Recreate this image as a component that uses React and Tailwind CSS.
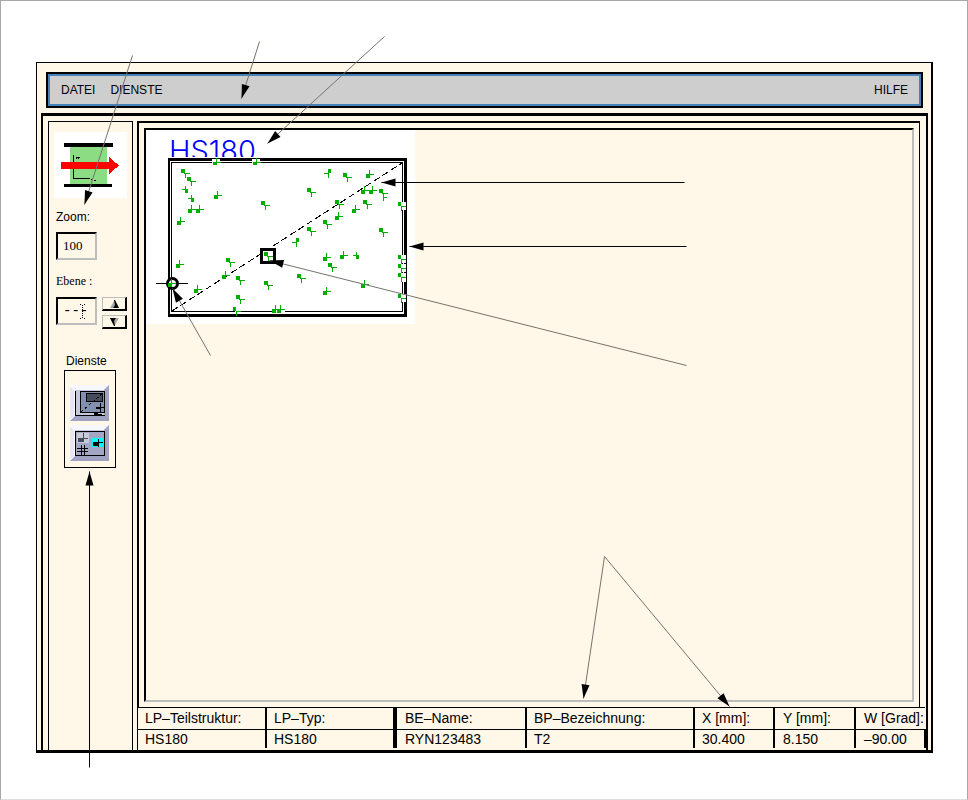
const MENU = ["DATEI", "DIENSTE"]

const FIELDS = [
  { label: "LP–Teilstruktur:", value: "HS180", head: "w-[128px] pl-[7px]", cell: "pl-[7px]" },
  { label: "LP–Typ:", value: "HS180", head: "w-[129px] border-l-2 pl-[7px]", cell: "border-l-2 pl-[7px]" },
  { label: "BE–Name:", value: "RYN123483", head: "w-[131px] border-l-4 pl-2", cell: "border-l-4 pl-2" },
  { label: "BP–Bezeichnung:", value: "T2", head: "w-[168px] border-l-2 pl-[7px]", cell: "border-l-2 pl-[7px]" },
  { label: "X [mm]:", value: "30.400", head: "w-[80px] border-l-2 pl-[7px]", cell: "border-l-2 pl-[7px]" },
  { label: "Y [mm]:", value: "8.150", head: "w-[81px] border-l-2 pl-2", cell: "border-l-2 pl-2" },
  { label: "W [Grad]:", value: "–90.00", head: "border-l-2 pl-2", cell: "border-x-2 pl-2" },
]

// component marks on the board, in board coordinates
const PARTS = {
  downRight: [
    [185, 173], [191, 181], [265, 205], [347, 177], [311, 192], [339, 204], [367, 204],
    [327, 224], [311, 231], [383, 232], [383, 193], [230, 262], [240, 280], [240, 299],
    [268, 285], [268, 256], [332, 267], [301, 278],
  ],
  upRight: [
    [191, 209], [199, 209], [180, 221], [217, 195], [369, 174], [364, 190], [372, 190],
    [338, 216], [355, 209], [179, 264], [197, 289], [225, 275], [171, 283], [275, 309],
    [280, 309], [326, 257], [343, 255], [326, 291], [364, 284],
  ],
  upLeft: [[185, 189], [191, 198], [356, 255]],
  downLeft: [[328, 173], [296, 242]],
  edgeDown: [[402, 206], [402, 259], [402, 268], [402, 277], [402, 298], [237, 311]],
  edgeUp: [[216, 162], [256, 162]],
}

const SHAPES = {
  downRight: "M-4 -4h4v4h5v1h-4v4h-1v-4h-1v-1h-3z",
  upRight: "M0 -4h1v4h4v1h-4v3h-4v-4h3z",
  upLeft: "M0 -3h1v3h2v4h-3v-3h-3v-1h3z",
  downLeft: "M0 -4h3v4h-2v5h-1v-4h-4v-1h4z",
  edgeDown: "M-4 -4h3v4h5v1h-4v4h-1v-5h-3z",
  edgeUp: "M0 -4h1v4h4v1h-4v2h-4v-3h3z",
}

const ARROWS = [
  { from: [132, 55], to: [84, 204] },
  { from: [259, 41], to: [241, 98] },
  { from: [384, 36], to: [267, 143] },
  { from: [684, 182], to: [381, 182], solid: true },
  { from: [686, 246], to: [409, 246], solid: true },
  { from: [686, 365], to: [269, 260] },
  { from: [210, 355], to: [172, 288] },
  { from: [89, 767], to: [89, 471], solid: true },
  { from: [604, 556], to: [583, 698] },
  { from: [604, 556], to: [729, 706] },
]

function Arrow({ from, to, solid }) {
  const angle = (Math.atan2(to[1] - from[1], to[0] - from[0]) * 180) / Math.PI
  return (
    <g>
      <line
        x1={from[0] + 0.5}
        y1={from[1] + 0.5}
        x2={to[0] + 0.5}
        y2={to[1] + 0.5}
        stroke={solid ? "#000" : "#77736c"}
      />
      <polygon
        points="0,0 -14,-4 -14,4"
        transform={`translate(${to[0] + 0.5} ${to[1] + 0.5}) rotate(${angle})`}
      />
    </g>
  )
}

function Callouts() {
  return (
    <svg
      className="absolute -top-px -left-px pointer-events-none"
      width="968"
      height="800"
      viewBox="0 0 968 800"
      aria-hidden="true"
    >
      {ARROWS.map((a, i) => <Arrow key={i} {...a} />)}
    </svg>
  )
}

function Board() {
  return (
    <svg width="269" height="194" viewBox="146 130 269 194" className="block bg-white">
      <clipPath id="title">
        <rect x="146" y="130" width="269" height="27" />
      </clipPath>
      <text
        x="169"
        y="161"
        fill="#0000ff"
        clipPath="url(#title)"
        className="font-['Inter',sans-serif] text-[29px] font-light"
      >
        HS180
      </text>

      <g shapeRendering="crispEdges">
        <path d="M168 158H407V317H168ZM170 161V314H404V161Z" fillRule="evenodd" />
        <rect x="171.5" y="162.5" width="231" height="149" fill="none" stroke="#000" />
        <line x1="172" y1="311" x2="402" y2="163" stroke="#000" strokeDasharray="7 3" />
        <path d="M212 159h8v4h-8zM252 159h8v4h-8zM235 308h6v5h-6z" fill="#fff" />
        <path d="M401 202h5v8h-5zM401 255h5v8h-5zM401 264h5v8h-5zM401 273h5v9h-5zM401 294h5v8h-5zM272 310h13v2h-13z" fill="#fff" />
      </g>

      <circle cx="172.5" cy="283.5" r="5" fill="#fff" stroke="#000" strokeWidth="3" />
      <path d="M156 283.500H188" stroke="#000" />
      <rect x="261.500" y="249.500" width="13" height="13" fill="#fff" stroke="#000" strokeWidth="3" />

      <g fill="#00ae00" shapeRendering="crispEdges">
        {Object.entries(PARTS).map(([kind, points]) =>
          points.map(([x, y]) => (
            <path key={`${kind}-${x}-${y}`} d={SHAPES[kind]} transform={`translate(${x} ${y})`} />
          ))
        )}
        <path d="M383 197h4v1h-3v3h-1z" />
      </g>
    </svg>
  )
}

function Logo() {
  return (
    <svg width="73" height="66" viewBox="54 132 73 66" className="block bg-white" shapeRendering="crispEdges">
      <rect x="70" y="147" width="37" height="37" fill="#8cdc84" />
      <rect x="64" y="143" width="49" height="4" />
      <rect x="64" y="184" width="48" height="3" />
      <path d="M73 155h1v23h16v1h-17z" />
      <path d="M76 157h4v1h-1v1h-1v-1h-1v1h-1zM91 179h2v1h3v1h-2v-1h-3z" />
      <path d="M61 162H109V157L119 165.500L109 174V169H61Z" fill="#ff0000" />
    </svg>
  )
}

function Bevel() {
  return (
    <>
      <rect width="39" height="36" fill="#c6c8de" />
      <path d="M0 0L39 0L33 5H5V30L0 36Z" fill="#f7f7fd" />
      <path d="M39 0V36H0L5 31H34V5Z" fill="#9fa2c0" />
      <path d="M0 2L4 5V31L0 34Z" fill="#e6e6f4" />
    </>
  )
}

function BoardIcon() {
  return (
    <svg width="39" height="36" viewBox="0 0 39 36" className="block" shapeRendering="crispEdges">
      <Bevel />
      <path d="M5 6h1v24h29v1H5z" />
      <rect x="10.500" y="6.500" width="24" height="21" fill="#8290b0" stroke="#000" />
      <rect x="16.500" y="8.500" width="16" height="8" fill="#454c5c" stroke="#000" />
      <path d="M11 27L33 8" stroke="#000" strokeDasharray="3 2" />
      <path d="M30 18h1v4h3v1h-3v4h-1v-3h-4v-2h4z" />
      <path d="M24 28h4v1h4v2h-6v-1h-2z" />
    </svg>
  )
}

function PartsIcon() {
  return (
    <svg width="39" height="36" viewBox="0 0 39 36" className="block" shapeRendering="crispEdges">
      <Bevel />
      <rect x="5.500" y="6.500" width="29" height="24" fill="#a3a7c3" stroke="#000" />
      <rect x="7" y="8" width="12" height="10" fill="#c8cadc" />
      <path d="M8 13h5v-5h1v5h4v1h-4v3H8z" fill="#454c5c" />
      <rect x="22" y="13" width="11" height="9" fill="#00ffff" />
      <path d="M23 17h5v-3h1v3h4v1h-4v4h-1v-1h-5z" />
      <path d="M11 20h1v10h-1zM14 20h1v10h-1zM7 23h11v1H7zM7 26h11v1H7z" />
    </svg>
  )
}

function SpinButton({ label, up }) {
  return (
    <button
      type="button"
      aria-label={label}
      className="flex items-center justify-center w-[25px] h-[14px] border-t border-l border-t-[#bdbdbd] border-l-[#bdbdbd] border-b-2 border-r-2 border-b-black border-r-black"
    >
      <svg width="9" height="8" viewBox="0 0 9 8" className={up ? "" : "rotate-180"}>
        <path d="M4.500 0L9 8H0Z" fill="#aaa" />
        <path d="M4 0H5L9 8H3L5 5Z" />
      </svg>
    </button>
  )
}

function Sidebar() {
  const field =
    "block w-[41px] h-[28px] pl-[5px] bg-transparent border-2 border-t-black border-l-black border-b-[#bdbdbd] border-r-[#bdbdbd] outline-none"

  return (
    <aside className="flex flex-col w-[85px] shrink-0 border border-b-0 border-black pt-[10px] pl-[5px]">
      <Logo />

      <label htmlFor="zoom" className="mt-[11px] ml-[2px] text-xs leading-4">Zoom:</label>
      <input
        id="zoom"
        defaultValue="100"
        className={`${field} mt-[7px] ml-[2px] text-[13px] font-['Liberation_Serif',serif]`}
      />

      <label htmlFor="ebene" className="mt-[13px] ml-[2px] text-xs leading-4 font-['Liberation_Serif',serif]">
        Ebene :
      </label>
      <div className="flex gap-[5px] mt-2 ml-[2px]">
        <div className="relative">
          <input
            id="ebene"
            defaultValue="---"
            className={`${field} text-sm font-['Liberation_Mono',monospace]`}
          />
          <svg
            className="absolute top-[7px] left-[23px] pointer-events-none"
            width="7"
            height="15"
            viewBox="0 0 7 15"
            shapeRendering="crispEdges"
          >
            <path d="M3.500 1V14M1 0.500H2M5 0.500H6M1 14.500H2M5 14.500H6" stroke="#000" strokeDasharray="1 1" />
          </svg>
        </div>
        <div className="flex flex-col gap-1">
          <SpinButton label="Ebene hoch" up />
          <SpinButton label="Ebene runter" />
        </div>
      </div>

      <h2 className="mt-6 ml-3 text-xs leading-4">Dienste</h2>
      <div className="flex flex-col gap-1 w-[52px] h-[98px] ml-[10px] mt-px pt-[14px] pl-[5px] border border-black">
        <button type="button" aria-label="Leiterplatte"><BoardIcon /></button>
        <button type="button" aria-label="Bauelemente"><PartsIcon /></button>
      </div>
    </aside>
  )
}

function StatusTable() {
  return (
    <div className="pb-[2px] border-l border-black">
      <table className="w-full table-fixed border-collapse text-sm leading-[18px] text-left whitespace-nowrap">
        <thead>
          <tr className="h-[22px] border-t border-b border-black">
            {FIELDS.map(f => (
              <th key={f.label} className={`${f.head} border-black p-0 font-normal`}>{f.label}</th>
            ))}
          </tr>
        </thead>
        <tbody>
          <tr className="h-[19px]">
            {FIELDS.map(f => (
              <td key={f.label} className={`${f.cell} border-black p-0`}>{f.value}</td>
            ))}
          </tr>
        </tbody>
      </table>
    </div>
  )
}

export default function App() {
  return (
    <div className="relative flex min-h-screen bg-white border border-[#a8a8a8] border-b-[#dedede] pt-[61px] pl-[35px] pr-[34px] pb-[46px] text-black font-['Liberation_Sans',Arial,sans-serif]">
      <div className="flex flex-col flex-1 min-w-0 bg-[#fff7e8] border-t border-l border-r-2 border-b-[3px] border-black">
        <nav className="mt-[9px] ml-[9px] mr-2 border-2 border-black">
          <div className="flex items-center gap-[15px] h-8 px-[11px] border-2 border-[#4682b8] bg-[#cecece] text-xs">
            {MENU.map(m => <button key={m} type="button">{m}</button>)}
            <button type="button" className="ml-auto">HILFE</button>
          </div>
        </nav>

        <div className="flex flex-1 gap-1 mt-[5px] ml-1 mr-[3px] pt-[5px] pl-[5px] border-t-[3px] border-x-2 border-black">
          <Sidebar />
          <main className="flex flex-col flex-1 min-w-0">
            <div className="flex flex-1 mr-[6px] p-[5px] border-t-2 border-l-2 border-r border-black">
              <div className="flex-1 border-2 border-t-black border-l-black border-b-[#bdbdbd] border-r-[#bdbdbd]">
                <Board />
              </div>
            </div>
            <StatusTable />
          </main>
        </div>
      </div>
      <Callouts />
    </div>
  )
}
